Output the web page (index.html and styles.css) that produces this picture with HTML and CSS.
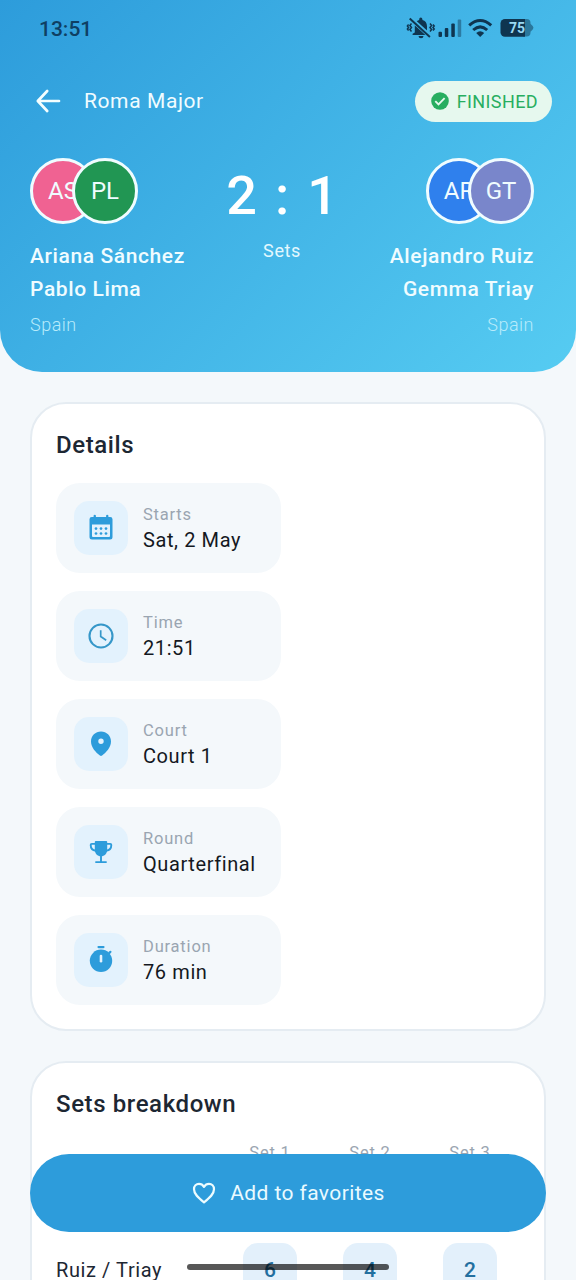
FILE: index.html
```html
<!DOCTYPE html>
<html lang="en">
<head>
<meta charset="utf-8">
<title>Roma Major</title>
<link rel="stylesheet" href="styles.css">
</head>
<body>
<div class="phone">
  <header class="hero">
    <div class="status">
      <span class="clock">13:51</span>
      <svg class="status-icons" width="130" height="24" viewBox="0 0 130 24" fill="#0f3550">
        <path d="M8.800 16.500V10.500C8.800 7 10.700 4.600 13.200 4V3.200a1.600 1.600 0 0 1 3.200 0V4c2.800.6 4.600 3 4.600 6.200v4.800l2.200 2.800v1.200H6.600v-1.200z"/>
        <path d="M12.500 20h5a2.500 2.300 0 0 1-5 0z"/>
        <path d="M3.500 1.700L24.500 20.700" stroke="#43b6e8" stroke-width="4.500"/>
        <path d="M3.700 2.500L23.900 20.900" stroke="#0f3550" stroke-width="2"/>
        <path d="M5.500 7.500l-1.600 2 1.600 2-1.600 2 1.600 2M2.600 8.500l-1.200 1.500 1.200 1.500-1.200 1.500 1.200 1.500M24 7.500l1.600 2-1.600 2 1.600 2-1.600 2M27 8.500l1.200 1.500-1.200 1.500 1.200 1.500-1.200 1.500" fill="none" stroke="#0f3550" stroke-width="1.500"/>
        <rect x="32.500" y="15.700" width="3.500" height="5.300" rx="1"/>
        <rect x="38.800" y="12" width="3.500" height="9" rx="1"/>
        <rect x="45.300" y="7.500" width="3.500" height="13.500" rx="1"/>
        <rect x="51.700" y="3.500" width="3.500" height="17.500" rx="1" opacity=".45"/>
        <g fill="none" stroke="#0f3550" stroke-width="3">
          <path d="M63.200 9.300Q74.200-.4 85.200 9.300"/>
          <path d="M67.200 14Q74.200 7.800 81.200 14"/>
        </g>
        <path d="M70.200 17.100Q74.200 13.500 78.200 17.100L74.200 21z"/>
        <path opacity=".5" d="M117 3h3.500a4 4 0 0 1 4 4v.7l2.200 2.300a2.500 2.500 0 0 1 0 3.400l-2.200 2.300v.8a4 4 0 0 1-4 4H117z"/>
        <path d="M99 3h20v17.800H99a4.500 4.500 0 0 1-4.500-4.500V7.500A4.500 4.500 0 0 1 99 3z"/>
        <text class="battery" x="111" y="16.800" text-anchor="middle">75</text>
      </svg>
    </div>
    <div class="topbar">
      <svg class="back" width="28" height="28" viewBox="0 0 28 28" fill="none" stroke="#f4feff" stroke-width="2.700" stroke-linecap="round" stroke-linejoin="round"><path d="M13.200 4L3.800 14l9.400 10M4.300 14H25"/></svg>
      <span class="event">Roma Major</span>
      <div class="badge">
        <svg width="18" height="18" viewBox="0 0 18 18"><circle cx="9" cy="9" r="8.800" fill="#27ae60"/><path d="M4.300 9.100l3.200 3.200 6.100-6.100" fill="none" stroke="#e6f8ee" stroke-width="1.900"/></svg>
        <span>FINISHED</span>
      </div>
    </div>
    <div class="match">
      <div class="team">
        <div class="avatars"><span class="avatar pink">AS</span><span class="avatar green">PL</span></div>
        <div class="names strong">Ariana Sánchez<br>Pablo Lima</div>
        <div class="country">Spain</div>
      </div>
      <div class="result">
        <div class="score"><span>2</span><span>:</span><span>1</span></div>
        <div class="sets">Sets</div>
      </div>
      <div class="team right">
        <div class="avatars"><span class="avatar blue">AR</span><span class="avatar violet">GT</span></div>
        <div class="names">Alejandro Ruiz<br>Gemma Triay</div>
        <div class="country">Spain</div>
      </div>
    </div>
  </header>

  <main class="content">
    <section class="card details">
      <h2>Details</h2>
      <div class="tiles">
        <div class="tile">
          <div class="icon"><svg width="28" height="28" viewBox="0 0 28 28"><path fill="#2d9cdb" fill-rule="evenodd" d="M6.600 1.500a1.200 1.200 0 0 1 2.300 0V3h10.200V1.500a1.200 1.200 0 0 1 2.300 0V3h1.800a2.300 2.300 0 0 1 2.300 2.300V23a2.500 2.500 0 0 1-2.500 2.500H5A2.500 2.500 0 0 1 2.500 23V5.300A2.300 2.300 0 0 1 4.800 3h1.800zM5 10.500V22a1 1 0 0 0 1 1h16a1 1 0 0 0 1-1V10.500z"/><g fill="#2d9cdb"><circle cx="9" cy="14.600" r="1.350"/><circle cx="14" cy="14.600" r="1.350"/><circle cx="19" cy="14.600" r="1.350"/><circle cx="9" cy="19.500" r="1.350"/><circle cx="14" cy="19.500" r="1.350"/><circle cx="19" cy="19.500" r="1.350"/></g></svg></div>
          <div class="info"><span class="label">Starts</span><span class="value">Sat, 2 May</span></div>
        </div>
        <div class="tile">
          <div class="icon"><svg width="28" height="28" viewBox="0 0 28 28" fill="none" stroke="#3597c9"><circle cx="14" cy="14" r="11.500" stroke-width="2.100"/><path d="M13.700 8.300V14.500l5.500 3.800" stroke-width="1.700"/></svg></div>
          <div class="info"><span class="label">Time</span><span class="value">21:51</span></div>
        </div>
        <div class="tile">
          <div class="icon"><svg width="28" height="28" viewBox="0 0 28 28"><path fill="#2d9cdb" fill-rule="evenodd" d="M14 1.500c5.600 0 10 4.300 10 9.900 0 6.200-5 10.800-8.900 14.200a1.700 1.700 0 0 1-2.200 0C9 22.200 4 17.600 4 11.400c0-5.600 4.400-9.900 10-9.900zm0 7a2.700 2.700 0 1 0 0 5.400 2.700 2.700 0 0 0 0-5.400z"/></svg></div>
          <div class="info"><span class="label">Court</span><span class="value">Court 1</span></div>
        </div>
        <div class="tile">
          <div class="icon"><svg width="28" height="28" viewBox="0 0 28 28"><path fill="#2d9cdb" d="M8.800 3h10.400q1 0 1 1v7.500c0 4-2.600 6.800-6.200 6.800s-6.200-2.800-6.200-6.800V4q0-1 1-1z"/><path fill="none" stroke="#2d9cdb" stroke-width="1.900" stroke-linecap="round" d="M8 5.900H4.800q-1.100 0-1.100 1.200c0 3.500 2 5.400 5.100 5.700M20 5.900h3.200q1.100 0 1.100 1.200c0 3.500-2 5.400-5.100 5.700M14 18v5.500M9 24.100h10"/></svg></div>
          <div class="info"><span class="label">Round</span><span class="value">Quarterfinal</span></div>
        </div>
        <div class="tile">
          <div class="icon"><svg width="28" height="28" viewBox="0 0 28 28"><g stroke="#2d9cdb" stroke-width="2.200" stroke-linecap="round"><path d="M11.500 1.100h5M21.500 7.800l1.900-1.900"/></g><circle cx="14" cy="14.800" r="11.200" fill="#2d9cdb"/><path d="M14 10v5.200" stroke="#e3f2fd" stroke-width="2.600" stroke-linecap="round"/></svg></div>
          <div class="info"><span class="label">Duration</span><span class="value">76 min</span></div>
        </div>
      </div>
    </section>

    <section class="card breakdown">
      <h2>Sets breakdown</h2>
      <div class="row head"><span></span><span>Set 1</span><span>Set 2</span><span>Set 3</span></div>
      <div class="row"><span class="pair">Sánchez / Lima</span><span class="cell">3</span><span class="cell">6</span><span class="cell">6</span></div>
      <div class="row"><span class="pair">Ruiz / Triay</span><span class="cell">6</span><span class="cell">4</span><span class="cell">2</span></div>
    </section>
  </main>

  <button class="favorite" type="button">
    <svg width="26" height="26" viewBox="0 0 26 26" fill="none" stroke="#edfcff" stroke-width="2.200" stroke-linejoin="round"><path d="M13 22.300C7 17.500 3 14 3 9.200 3 5.900 5.300 3.900 8 3.900c2 0 3.800 1 5 2.900 1.200-1.900 3-2.900 5-2.900 2.700 0 5 2 5 5.300 0 4.800-4 8.300-10 13.100z"/></svg>
    <span>Add to favorites</span>
  </button>
  <div class="gesture"></div>
</div>
</body>
</html>
```
FILE: styles.css
```css
* { box-sizing: border-box; }
body { margin: 0; font-family: Roboto, "Liberation Sans", sans-serif; }
.phone { position: relative; width: 576px; height: 1280px; overflow: hidden; background: #f4f8fb; }
svg { display: block; flex: none; }

.hero { height: 372px; padding: 0 24px 0 30px; border-radius: 0 0 42px 42px; background: linear-gradient(135deg, #2d9cdb, #56ccf2); color: #f0fcff; }
.status { display: flex; justify-content: space-between; height: 56px; padding: 16px 16px 0 9px; }
.clock { font-size: 21px; line-height: 26px; font-weight: 500; letter-spacing: 0; color: #0f3f63; }
.battery { font-size: 14px; font-weight: 700; fill: #9ad9f3; }
.topbar { display: flex; align-items: center; height: 90px; }
.back { margin-left: 4px; }
.event { flex: 1; margin-left: 22px; font-size: 21px; letter-spacing: .6px; }
.badge { display: flex; align-items: center; gap: 8px; height: 41px; padding: 0 14px 0 16px; border-radius: 21px; background: #e6f8ee; color: #27ae60; font-size: 18px; letter-spacing: .4px; }
.match { display: grid; grid-template-columns: 160px 1fr 160px; padding: 12px 18px 0 0; }
.avatars { display: flex; }
.avatar { display: flex; align-items: center; justify-content: center; width: 66px; height: 66px; border: 3px solid #f0fcff; border-radius: 50%; font-size: 24px; }
.avatar + .avatar { margin-left: -24px; }
.pink { background: #f06292; }
.green { background: #219653; }
.blue { background: #2f80ed; }
.violet { background: #7986cb; }
.names { margin-top: 16px; font-size: 21px; line-height: 32.500px; letter-spacing: .6px; font-weight: 500; white-space: nowrap; }
.country { margin-top: 9px; font-size: 18px; line-height: 22px; letter-spacing: .5px; font-weight: 300; color: #b8ebfb; }
.right { display: flex; flex-direction: column; align-items: flex-end; text-align: right; }
.result { text-align: center; }
.score { display: flex; justify-content: center; gap: 18px; margin-top: 6px; font-size: 54px; line-height: 64px; font-weight: 500; color: #fff; }
.sets { margin-top: 11px; font-size: 18px; line-height: 24px; letter-spacing: .6px; color: #e3f8fe; }

.content { display: flex; flex-direction: column; gap: 30px; padding: 30px; }
.card { padding: 25px 24px; border: 2px solid #e5ecf2; border-radius: 36px; background: #fff; }
.details { height: 629px; }
.breakdown { height: 330px; }
h2 { margin: 0; font-size: 24px; line-height: 32px; font-weight: 500; letter-spacing: .6px; color: #1d2733; }
.tiles { display: flex; flex-direction: column; gap: 18px; margin-top: 22px; }
.tile { display: flex; align-items: center; gap: 15px; width: 225px; height: 90px; padding: 0 18px; border-radius: 24px; background: #f4f8fb; }
.icon { display: flex; align-items: center; justify-content: center; width: 54px; height: 54px; border-radius: 15px; background: #e3f2fd; }
.info { display: flex; flex-direction: column; white-space: nowrap; }
.label { font-size: 16.500px; line-height: 24px; letter-spacing: .8px; color: #9aa5b1; }
.value { font-size: 20px; line-height: 27px; letter-spacing: .6px; color: #14181f; }
.row { display: grid; grid-template-columns: 164px 100px 100px 100px; height: 54px; margin-top: 18px; align-items: center; justify-items: center; }
.head { height: 24px; margin-top: 20px; font-size: 16.500px; letter-spacing: .8px; color: #9aa5b1; }
.head + .row { margin-top: 7px; }
.pair { justify-self: start; font-size: 20px; letter-spacing: .6px; color: #1d2733; }
.cell { display: flex; align-items: center; justify-content: center; width: 54px; height: 54px; border-radius: 15px; background: #e3f0fb; font-size: 21px; font-weight: 500; color: #236f9f; }

.favorite { position: absolute; left: 30px; top: 1154px; display: flex; align-items: center; justify-content: center; gap: 13px; width: 516px; height: 78px; padding: 0; border: 0; border-radius: 39px; background: #2d9cdb; color: #e9faff; font: 400 21px Roboto, "Liberation Sans", sans-serif; letter-spacing: .4px; }
.gesture { position: absolute; left: 187px; top: 1264px; width: 202px; height: 6px; border-radius: 3px; background: rgba(0, 0, 0, .66); }
```
